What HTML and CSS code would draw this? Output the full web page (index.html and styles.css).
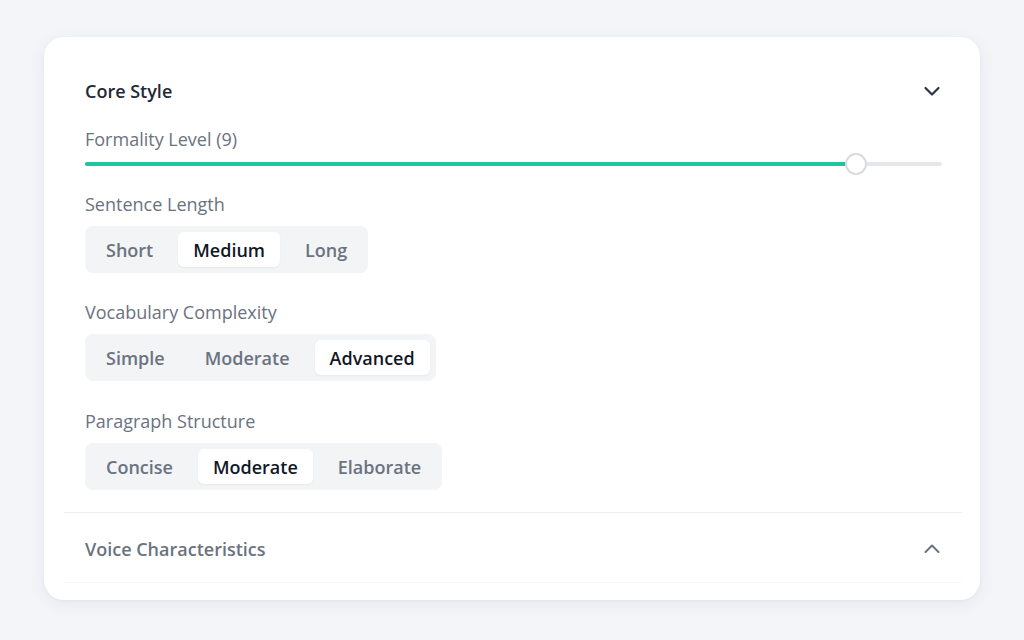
FILE: index.html
```html
<!DOCTYPE html>
<html lang="en">
<head>
<meta charset="utf-8">
<title>Style Settings</title>
<link rel="stylesheet" href="styles.css">
</head>
<body>
<main class="card">
  <section class="section">
    <header class="section-header">
      <h2 class="section-title">Core Style</h2>
      <svg class="chevron" width="20" height="20" viewBox="0 0 20 20" fill="none" stroke="#2b3445" stroke-width="2.2" stroke-linecap="round" stroke-linejoin="round"><path d="M3.5 7l6.5 6.5L16.5 7"/></svg>
    </header>

    <div class="field field-slider">
      <div class="label">Formality Level (9)</div>
      <div class="slider">
        <div class="slider-fill" style="width:90%"></div>
        <div class="slider-thumb" style="left:90%"></div>
      </div>
    </div>

    <div class="field">
      <div class="label">Sentence Length</div>
      <div class="segmented">
        <button class="seg">Short</button>
        <button class="seg active">Medium</button>
        <button class="seg">Long</button>
      </div>
    </div>

    <div class="field">
      <div class="label">Vocabulary Complexity</div>
      <div class="segmented">
        <button class="seg">Simple</button>
        <button class="seg">Moderate</button>
        <button class="seg active">Advanced</button>
      </div>
    </div>

    <div class="field">
      <div class="label">Paragraph Structure</div>
      <div class="segmented">
        <button class="seg">Concise</button>
        <button class="seg active">Moderate</button>
        <button class="seg">Elaborate</button>
      </div>
    </div>
  </section>

  <section class="section collapsed">
    <header class="section-header">
      <h2 class="section-title muted">Voice Characteristics</h2>
      <svg class="chevron" width="20" height="20" viewBox="0 0 20 20" fill="none" stroke="#6b7280" stroke-width="2" stroke-linecap="round" stroke-linejoin="round"><path d="M3.5 13l6.5-6.5L16.5 13"/></svg>
    </header>
  </section>
</main>
</body>
</html>
```

FILE: styles.css
```css
* { box-sizing: border-box; }

html, body {
  margin: 0;
  padding: 0;
}

body {
  background: #f4f5f9;
  font-family: "Open Sans", "Noto Sans", "Liberation Sans", sans-serif;
  width: 1024px;
  height: 640px;
  padding: 37px 44px 40px 44px;
}

.card {
  background: #ffffff;
  border-radius: 20px;
  box-shadow: 0 4px 18px rgba(30, 40, 70, 0.06), 0 1px 3px rgba(30, 40, 70, 0.04);
  padding: 20px 17px 19px 20px;
  height: 563px;
}

.section {
  padding: 21px 21px 22px 21px;
  border-bottom: 1px solid #eff0f3;
}

.section.collapsed {
  padding-top: 23px;
  padding-bottom: 20px;
  border-bottom-color: #f8f8fa;
}

.section-header {
  display: flex;
  align-items: center;
  justify-content: space-between;
  height: 26px;
}

.section-title {
  margin: 0;
  font-size: 18px;
  font-weight: 600;
  color: #1f2937;
}

.section-title.muted {
  color: #6b7280;
}

.chevron {
  display: block;
}

.field {
  margin-top: 27px;
}

.field:last-child {
  margin-top: 28px;
}

.field-slider {
  margin-top: 23px;
}

.field-slider + .field {
  margin-top: 26px;
}

.label {
  font-size: 18px;
  line-height: 24px;
  color: #6b7280;
}

.slider {
  position: relative;
  height: 4px;
  margin-top: 11px;
  background: #e5e7eb;
  border-radius: 2px;
}

.slider-fill {
  height: 100%;
  background: #1fc4a0;
  border-radius: 2px;
}

.slider-thumb {
  position: absolute;
  top: 50%;
  width: 22px;
  height: 22px;
  margin-left: -11px;
  margin-top: -11px;
  border-radius: 50%;
  background: #ffffff;
  border: 2px solid #d9dbe0;
}

.segmented {
  display: inline-flex;
  gap: 10px;
  margin-top: 10px;
  padding: 6px;
  background: #f3f4f6;
  border-radius: 8px;
}

.seg {
  border: none;
  background: transparent;
  font-family: inherit;
  font-size: 18px;
  font-weight: 600;
  color: #6b7280;
  padding: 0 15px;
  height: 35px;
  border-radius: 6px;
  cursor: pointer;
}

.seg.active {
  background: #ffffff;
  color: #111827;
  box-shadow: 0 1px 2px rgba(0, 0, 0, 0.05);
}
```
